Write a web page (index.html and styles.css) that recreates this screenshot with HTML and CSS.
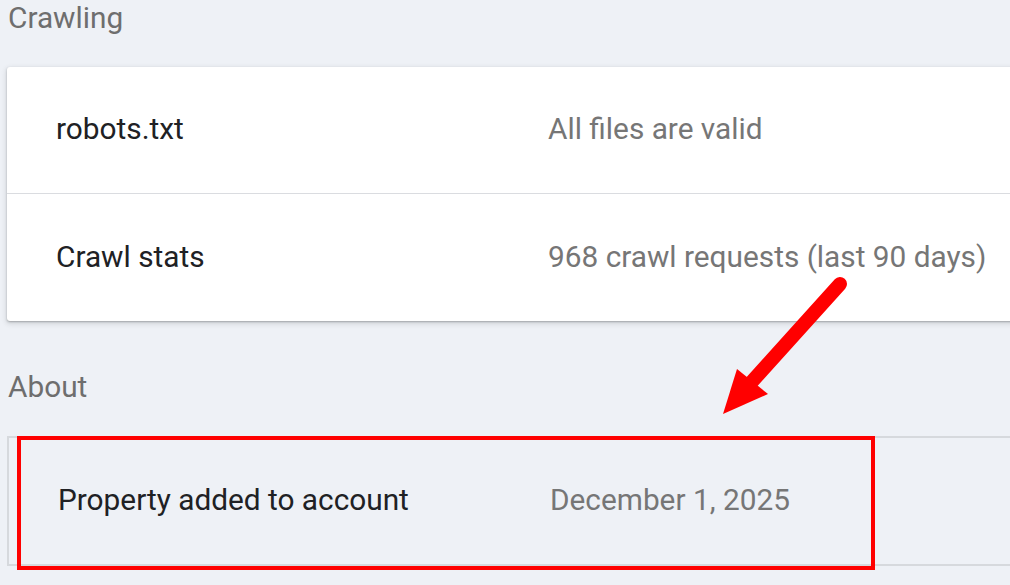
FILE: index.html
```html
<!DOCTYPE html>
<html lang="en">
<head>
<meta charset="utf-8">
<title>Crawling</title>
<link rel="stylesheet" href="styles.css">
</head>
<body>
<main class="page">
  <h2 class="section-title">Crawling</h2>
  <section class="card">
    <div class="row">
      <span class="label">robots.txt</span>
      <span class="value">All files are valid</span>
    </div>
    <div class="row row-divided">
      <span class="label">Crawl stats</span>
      <span class="value">968 crawl requests (last 90 days)</span>
    </div>
  </section>
  <h2 class="section-title about-title">About</h2>
  <section class="card card-flat">
    <div class="row">
      <span class="label">Property added to account</span>
      <span class="value">December 1, 2025</span>
    </div>
  </section>
</main>
<div class="highlight"></div>
<svg class="arrow" width="1010" height="585" viewBox="0 0 1010 585" aria-hidden="true">
  <line x1="840" y1="284" x2="748" y2="386" stroke="#ff0000" stroke-width="14" stroke-linecap="round"/>
  <polygon points="723,414 737,369 768,394" fill="#ff0000"/>
</svg>
</body>
</html>
```
FILE: styles.css
```css
html, body {
  margin: 0;
  padding: 0;
  overflow: hidden;
}
body {
  background: #eef1f6;
  font-family: Roboto, "Noto Sans", "Liberation Sans", sans-serif;
  width: 1010px;
  height: 585px;
  position: relative;
}
.page {
  padding-left: 7px;
  margin-right: -40px;
}
.section-title {
  margin: 0;
  padding: 0 0 0 1px;
  font-size: 29.8px;
  line-height: 35px;
  font-weight: 400;
  color: #6e6e6e;
  height: 35px;
}
.card {
  margin-top: 32px;
  background: #ffffff;
  border-radius: 3px 0 0 3px;
  box-shadow: 0 1px 2px rgba(60, 64, 67, 0.35), 0 2px 5px 1px rgba(60, 64, 67, 0.15);
}
.about-title {
  margin-top: 48px;
}
.card-flat {
  margin-top: 32px;
  background: transparent;
  box-shadow: none;
  border: 2px solid #d6d9dd;
  border-right: none;
  border-radius: 0;
}
.row {
  display: grid;
  grid-template-columns: 492px 1fr;
  align-items: center;
  padding-left: 49px;
  padding-bottom: 3px;
  box-sizing: border-box;
  height: 126px;
  font-size: 29.8px;
  white-space: nowrap;
}
.row-divided {
  border-top: 1px solid #dadce0;
  height: 128px;
}
.label {
  color: #202124;
}
.value {
  color: #767676;
}
.highlight {
  position: absolute;
  left: 17px;
  top: 436px;
  width: 850px;
  height: 126px;
  border: 4px solid #ff0000;
}
.arrow {
  position: absolute;
  left: 0;
  top: 0;
  pointer-events: none;
}
```
